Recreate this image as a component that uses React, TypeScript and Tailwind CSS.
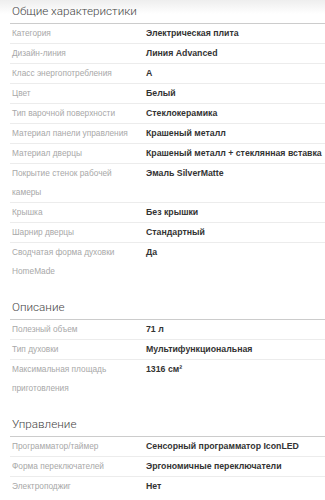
type Spec = { label: string; value: string };

const sections: { title: string; rows: Spec[] }[] = [
  {
    title: "Общие характеристики",
    rows: [
      { label: "Категория", value: "Электрическая плита" },
      { label: "Дизайн-линия", value: "Линия Advanced" },
      { label: "Класс энергопотребления", value: "A" },
      { label: "Цвет", value: "Белый" },
      { label: "Тип варочной поверхности", value: "Стеклокерамика" },
      { label: "Материал панели управления", value: "Крашеный металл" },
      { label: "Материал дверцы", value: "Крашеный металл + стеклянная вставка" },
      { label: "Покрытие стенок рабочей камеры", value: "Эмаль SilverMatte" },
      { label: "Крышка", value: "Без крышки" },
      { label: "Шарнир дверцы", value: "Стандартный" },
      { label: "Сводчатая форма духовки HomeMade", value: "Да" },
    ],
  },
  {
    title: "Описание",
    rows: [
      { label: "Полезный объем", value: "71 л" },
      { label: "Тип духовки", value: "Мультифункциональная" },
      { label: "Максимальная площадь приготовления", value: "1316 см²" },
    ],
  },
  {
    title: "Управление",
    rows: [
      { label: "Программатор/таймер", value: "Сенсорный программатор IconLED" },
      { label: "Форма переключателей", value: "Эргономичные переключатели" },
      { label: "Электроподжиг", value: "Нет" },
    ],
  },
];

export default function App() {
  return (
    <div className="min-h-[500px] bg-[linear-gradient(#eeeeee,#ffffff_14px)] pl-[10px] font-['Liberation_Sans',Arial,sans-serif]">
      {sections.map((section, s) => (
        <section key={section.title} className={s === 0 ? "" : "mt-[15px]"}>
          <h2 className="border-b border-[#cccccc] pl-[2px] font-['Roboto',sans-serif] text-[11.7px] font-light leading-[23px] text-[#444444]">
            {section.title}
          </h2>
          <dl>
            {section.rows.map((row, i) => (
              <div
                key={row.label}
                className={`grid grid-cols-[134px_1fr] items-baseline pl-[2px] leading-[19px] ${
                  i === section.rows.length - 1 ? "" : "border-b border-[#ececec]"
                }`}
              >
                <dt className="pr-3 text-[8.3px] text-[#a8a8a8]">{row.label}</dt>
                <dd className="text-[8.75px] font-bold text-[#333333]">{row.value}</dd>
              </div>
            ))}
          </dl>
        </section>
      ))}
    </div>
  );
}
